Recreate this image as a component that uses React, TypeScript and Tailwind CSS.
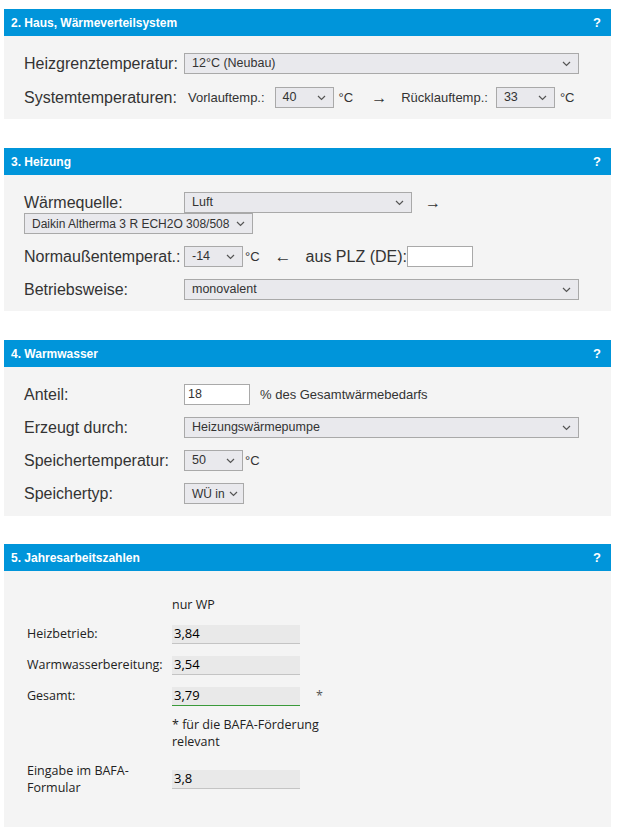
import React from "react";

const Chevron = () => (
  <svg width="9" height="6" viewBox="0 0 9 6" className="shrink-0">
    <path d="M1 1 L4.5 4.5 L8 1" fill="none" stroke="#555" strokeWidth="1.2" />
  </svg>
);

const Select = ({ text, w, small }: { text: string; w: string; small?: boolean }) => (
  <div
    className={`${w} h-[21px] shrink-0 flex items-center justify-between gap-[4px] bg-[#e9e9ed] border border-[#a9a9a9] pl-[7px] pr-[7px] ${small ? "text-[12px]" : "text-[12.5px]"} text-[#333] leading-none`}
  >
    <span className="whitespace-nowrap">{text}</span>
    <Chevron />
  </div>
);

const Header = ({ title }: { title: string }) => (
  <div className="h-[27px] bg-[#0095da] flex items-center justify-between pl-[7px] pr-[10px] text-white text-[12px] font-bold">
    <span>{title}</span>
    <span className="text-[13px]">?</span>
  </div>
);

const Label = ({ children }: { children: React.ReactNode }) => (
  <div className="w-[160px] shrink-0 text-[16px] text-[#333] leading-none whitespace-nowrap">{children}</div>
);

export default function App() {
  return (
    <div className="bg-white min-h-[836px] pt-[9px] px-[4px] font-['Liberation_Sans',Arial,sans-serif] w-[617px]">
      {/* Section 2 */}
      <div className="w-[607px]">
        <Header title="2. Haus, Wärmeverteilsystem" />
        <div className="bg-[#f4f4f4] pl-[20px] pt-[17px] pb-[11px] flex flex-col gap-[13px]">
          <div className="flex items-center h-[21px]">
            <Label>Heizgrenztemperatur:</Label>
            <Select text="12°C (Neubau)" w="w-[395px]" />
          </div>
          <div className="flex items-center h-[21px]">
            <Label>Systemtemperaturen:</Label>
            <span className="text-[13px] text-[#333] ml-[4px] mr-[10px]">Vorlauftemp.:</span>
            <Select text="40" w="w-[59px]" />
            <span className="text-[13px] text-[#333] ml-[5px]">°C</span>
            <span className="text-[16px] text-[#333] ml-[18px]">→</span>
            <span className="text-[13px] text-[#333] ml-[14px] mr-[8px]">Rücklauftemp.:</span>
            <Select text="33" w="w-[59px]" />
            <span className="text-[13px] text-[#333] ml-[5px]">°C</span>
          </div>
        </div>
      </div>

      {/* Section 3 */}
      <div className="w-[607px] mt-[29px]">
        <Header title="3. Heizung" />
        <div className="bg-[#f4f4f4] pl-[20px] pt-[17px] pb-[11px] flex flex-col">
          <div className="flex items-center h-[21px]">
            <Label>Wärmequelle:</Label>
            <Select text="Luft" w="w-[228px]" />
            <span className="text-[16px] text-[#333] ml-[13px]">→</span>
          </div>
          <div className="flex items-center h-[21px]">
            <Select text="Daikin Altherma 3 R ECH2O 308/508" w="w-[229px]" small />
          </div>
          <div className="flex items-center h-[21px] mt-[12px]">
            <Label>Normaußentemperat.:</Label>
            <Select text="-14" w="w-[59px]" />
            <span className="text-[13px] text-[#333] ml-[2px]">°C</span>
            <span className="text-[17px] text-[#333] ml-[15px]">←</span>
            <span className="text-[16px] text-[#333] ml-[14px]">aus PLZ (DE):</span>
            <div className="w-[66px] h-[21px] bg-white border border-[#a9a9a9]" />
          </div>
          <div className="flex items-center h-[21px] mt-[12px]">
            <Label>Betriebsweise:</Label>
            <Select text="monovalent" w="w-[395px]" />
          </div>
        </div>
      </div>

      {/* Section 4 */}
      <div className="w-[607px] mt-[29px]">
        <Header title="4. Warmwasser" />
        <div className="bg-[#f4f4f4] pl-[20px] pt-[17px] pb-[12px] flex flex-col gap-[12px]">
          <div className="flex items-center h-[21px]">
            <Label>Anteil:</Label>
            <div className="w-[66px] h-[21px] bg-white border border-[#a9a9a9] flex items-center pl-[3px] text-[12.5px] text-[#333]">18</div>
            <span className="text-[13px] text-[#333] ml-[10px]">% des Gesamtwärmebedarfs</span>
          </div>
          <div className="flex items-center h-[21px]">
            <Label>Erzeugt durch:</Label>
            <Select text="Heizungswärmepumpe" w="w-[395px]" />
          </div>
          <div className="flex items-center h-[21px]">
            <Label>Speichertemperatur:</Label>
            <Select text="50" w="w-[59px]" />
            <span className="text-[13px] text-[#333] ml-[2px]">°C</span>
          </div>
          <div className="flex items-center h-[21px]">
            <Label>Speichertyp:</Label>
            <Select text="WÜ in" w="w-[60px]" small />
          </div>
        </div>
      </div>

      {/* Section 5 */}
      <div className="w-[607px] mt-[28px]">
        <Header title="5. Jahresarbeitszahlen" />
        <div className="bg-[#f4f4f4] pl-[23px] pt-[25px] h-[256px] font-['Open_Sans',sans-serif] text-[12.5px] text-[#222]">
          <div className="flex items-center h-[19px]">
            <div className="w-[145px]" />
            <span>nur WP</span>
          </div>
          <div className="flex items-center h-[19px] mt-[10px]">
            <div className="w-[145px]">Heizbetrieb:</div>
            <div className="w-[128px] h-[19px] bg-[#e9e9e9] border-b border-[#c4c4c4] flex items-center pl-[2px] text-[13px] text-black">3,84</div>
          </div>
          <div className="flex items-center h-[19px] mt-[12px]">
            <div className="w-[145px]">Warmwasserbereitung:</div>
            <div className="w-[128px] h-[19px] bg-[#e9e9e9] border-b border-[#c4c4c4] flex items-center pl-[2px] text-[13px] text-black">3,54</div>
          </div>
          <div className="flex items-center h-[19px] mt-[12px]">
            <div className="w-[145px]">Gesamt:</div>
            <div className="w-[128px] h-[19px] bg-[#e9e9e9] border-b border-[#3a9a3a] flex items-center pl-[2px] text-[13px] text-black">3,79</div>
            <span className="ml-[16px] text-[#555]">*</span>
          </div>
          <div className="flex mt-[10px]">
            <div className="w-[145px]" />
            <div className="leading-[17px]">* für die BAFA-Förderung<br />relevant</div>
          </div>
          <div className="flex items-center mt-[12px]">
            <div className="w-[145px] leading-[17px]">Eingabe im BAFA-<br />Formular</div>
            <div className="w-[128px] h-[19px] bg-[#e9e9e9] border-b border-[#c4c4c4] flex items-center pl-[2px] text-[13px] text-black">3,8</div>
          </div>
        </div>
      </div>
    </div>
  );
}
